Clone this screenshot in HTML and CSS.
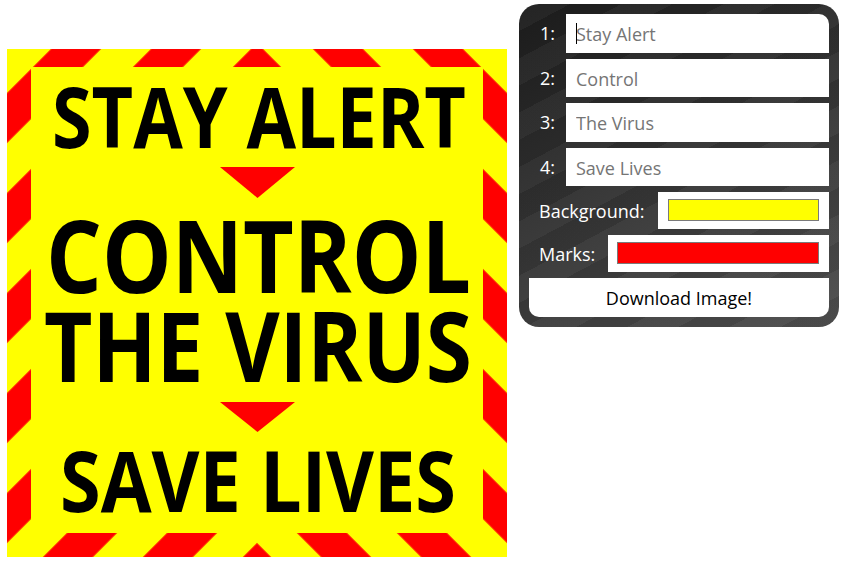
FILE: index.html
```html
<!DOCTYPE html>
<html>
<head>
<meta charset="utf-8">
<title>Stay Alert Sign</title>
<link rel="stylesheet" href="styles.css">
</head>
<body>
<div class="page">
  <svg class="sign" width="500" height="508" viewBox="0 0 500 508" xmlns="http://www.w3.org/2000/svg">
    <defs>
      <pattern id="hz" patternUnits="userSpaceOnUse" width="70.711" height="20" patternTransform="rotate(45)">
        <rect x="31.113" y="0" width="35.355" height="20" fill="#ff0000"/>
      </pattern>
    </defs>
    <rect width="500" height="508" fill="#ffff00"/>
    <path id="band" d="M0 0H250V508H0Z M24 18H250V484H24Z" fill="url(#hz)" fill-rule="evenodd"/>
    <use href="#band" transform="translate(500 0) scale(-1 1)"/>
    <polygon points="213,118 288,118 250.5,149" fill="#ff0000"/>
    <polygon points="213,353 288,353 250.5,383" fill="#ff0000"/>
    <text class="l1" x="45" y="99" textLength="414" lengthAdjust="spacingAndGlyphs">STAY ALERT</text>
    <text class="l2" x="39" y="244" textLength="425" lengthAdjust="spacingAndGlyphs">CONTROL</text>
    <text class="l3" x="37" y="333" textLength="428" lengthAdjust="spacingAndGlyphs">THE VIRUS</text>
    <text class="l4" x="53" y="463" textLength="396" lengthAdjust="spacingAndGlyphs">SAVE LIVES</text>
  </svg>

  <div class="panel">
    <div class="row">
      <label class="num">1:</label>
      <div class="field first"><input type="text" placeholder="Stay Alert"><span class="caret"></span></div>
    </div>
    <div class="row">
      <label class="num">2:</label>
      <div class="field"><input type="text" placeholder="Control"></div>
    </div>
    <div class="row">
      <label class="num">3:</label>
      <div class="field"><input type="text" placeholder="The Virus"></div>
    </div>
    <div class="row">
      <label class="num">4:</label>
      <div class="field"><input type="text" placeholder="Save Lives"></div>
    </div>
    <div class="row crow">
      <label class="lbl lbl-bg">Background:</label>
      <div class="box box-bg"><span class="swatch sw-yellow"></span></div>
    </div>
    <div class="row crow">
      <label class="lbl lbl-marks">Marks:</label>
      <div class="box box-marks"><span class="swatch sw-red"></span></div>
    </div>
    <button class="download" type="button">Download Image!</button>
  </div>
</div>
</body>
</html>
```
FILE: styles.css
```css
html, body {
  margin: 0;
  padding: 0;
  background: #ffffff;
}

body {
  font-family: "Open Sans", "Noto Sans", sans-serif;
}

.page {
  display: flex;
  align-items: flex-start;
  padding: 4px 0 0 7px;
}

.sign {
  display: block;
  flex: none;
  margin-top: 45px;
}

.sign text {
  font-family: "Open Sans", "Noto Sans", sans-serif;
  font-weight: 700;
  fill: #000000;
}

.sign .l1 { font-size: 85px; }
.sign .l2 { font-size: 100px; }
.sign .l3 { font-size: 97px; }
.sign .l4 { font-size: 85px; }

.panel {
  flex: none;
  margin-left: 12px;
  width: 320px;
  box-sizing: border-box;
  padding: 10px;
  border-radius: 20px;
  display: flex;
  flex-direction: column;
  gap: 6px;
  background:
    repeating-linear-gradient(152deg, rgba(255,255,255,0.035) 0 24px, rgba(0,0,0,0.035) 24px 48px),
    linear-gradient(152deg, #1c1c1c 0%, #2c2c2c 35%, #4e4e4e 100%);
}

.row {
  display: flex;
  height: 38.5px;
}

.crow {
  height: 37px;
}

.num {
  width: 37px;
  flex: none;
  box-sizing: border-box;
  padding-left: 11px;
  color: #ffffff;
  font-size: 18px;
  display: flex;
  align-items: center;
}

.field {
  flex: 1;
  position: relative;
  background: #ffffff;
}

.field.first {
  border-top-right-radius: 10px;
}

.field input {
  display: block;
  width: 100%;
  height: 100%;
  box-sizing: border-box;
  border: 0;
  margin: 0;
  padding: 2px 10px 0;
  background: transparent;
  outline: none;
  font-family: "Open Sans", "Noto Sans", sans-serif;
  font-size: 18px;
  color: #333333;
}

.field input::placeholder {
  color: #757575;
}

.caret {
  position: absolute;
  left: 10px;
  top: 9px;
  width: 1px;
  height: 21px;
  background: #000000;
}

.lbl {
  flex: none;
  box-sizing: border-box;
  padding-left: 10px;
  color: #ffffff;
  font-size: 18px;
  display: flex;
  align-items: center;
}

.lbl-bg { width: 129px; }
.lbl-marks { width: 79px; }

.box {
  flex: 1;
  display: flex;
  box-sizing: border-box;
  background: #ffffff;
  padding: 7px 10px 8px 10px;
}

.box-marks {
  padding-left: 9px;
}

.swatch {
  flex: 1;
  border: 1px solid #7a7a7a;
}

.sw-yellow { background: #ffff00; }
.sw-red { background: #ff0000; }

.download {
  display: block;
  height: 39px;
  border: 0;
  margin: 0;
  padding: 0;
  background: #ffffff;
  border-radius: 0 0 10px 10px;
  font-family: "Open Sans", "Noto Sans", sans-serif;
  font-size: 18px;
  color: #000000;
}
```
